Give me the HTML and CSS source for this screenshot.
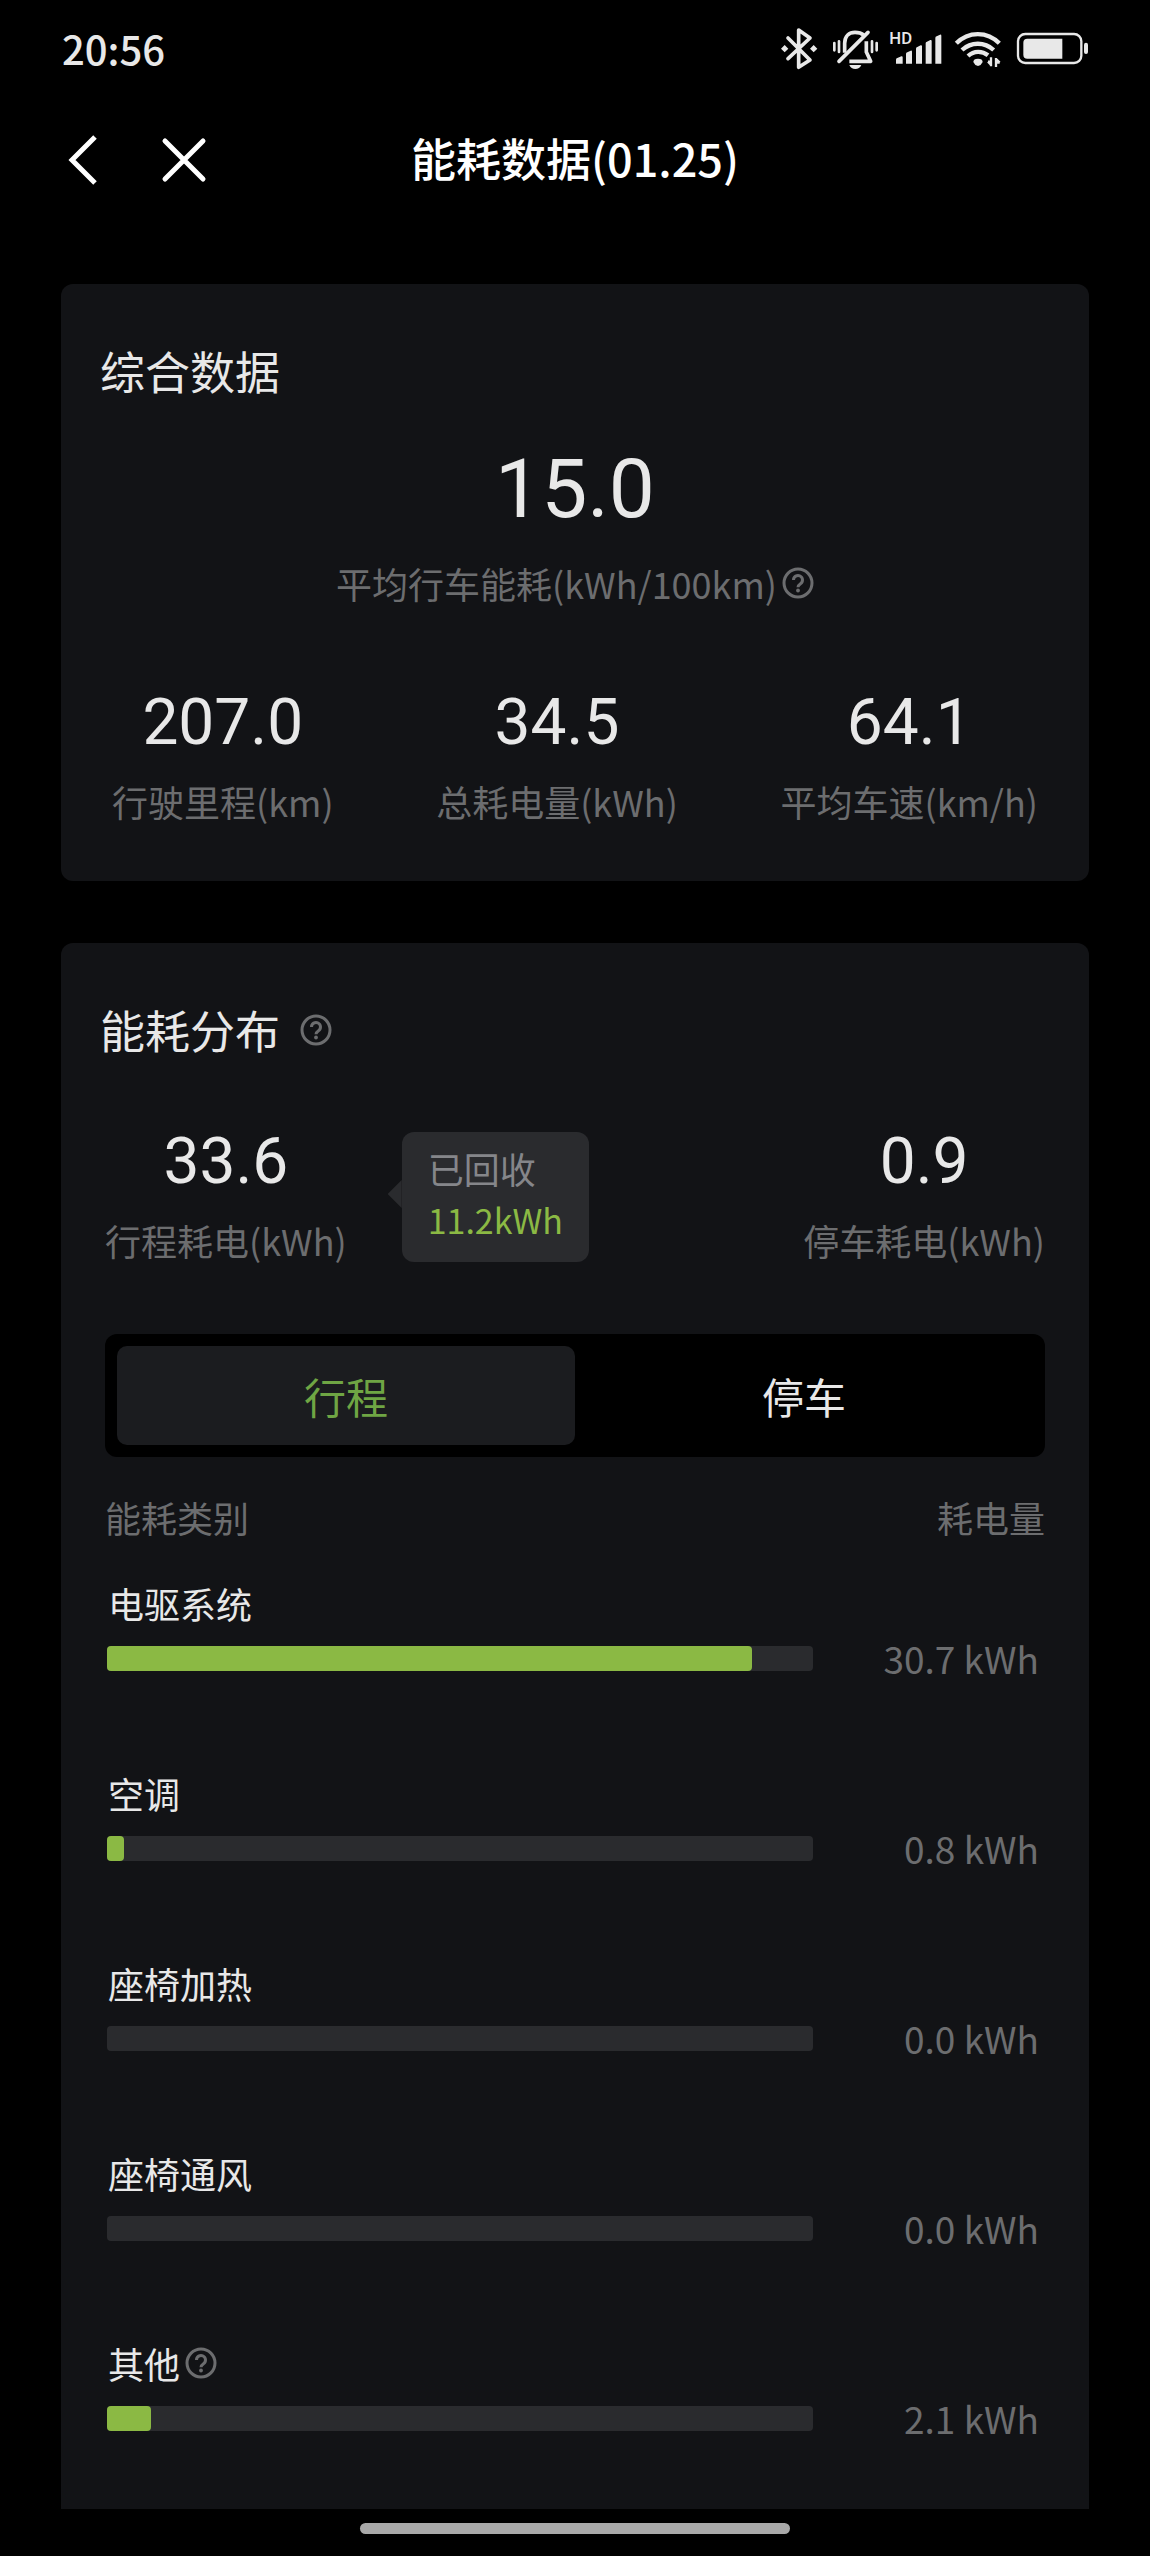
FILE: index.html
```
<!DOCTYPE html>
<html lang="zh-CN">
<head>
    <meta charset="UTF-8">
    <meta name="viewport" content="width=device-width, initial-scale=1.0">
    <title>能耗数据</title>
    <link rel="stylesheet" href="styles.css">
</head>
<body>
    <svg class="sprite" aria-hidden="true">
        <symbol id="help" viewBox="0 0 32 32">
            <circle cx="16" cy="16" r="14" fill="none" stroke="currentColor" stroke-width="3"/>
            <path d="M11.500 13a4.500 4.500 0 1 1 7 3.700c-1.700 1.200-2.500 1.800-2.500 3.500" fill="none" stroke="currentColor" stroke-width="3"/>
            <circle cx="16" cy="23.500" r="1.900" fill="currentColor"/>
        </symbol>
    </svg>

    <div class="status-bar">
        <span class="time">20:56</span>
        <div class="status-icons">
            <svg width="39" height="44" viewBox="60 54 117 132">
                <path d="M84 84l66 66-34 22V60l34 24-66 62" fill="none" stroke="currentColor" stroke-width="11" stroke-linejoin="round" stroke-linecap="round"/>
                <path d="M63 116l11-11 11 11-11 11zM150 116l11-11 11 11-11 11z" fill="currentColor"/>
            </svg>
            <svg width="48" height="44" viewBox="213 54 144 132">
                <path d="M254 128v-28c0-22 14-33 31-33 12 0 20 3 26 8M319 94v32l13 28h-64" fill="none" stroke="currentColor" stroke-width="11" stroke-linejoin="round"/>
                <path d="M237 154l87-87" stroke="currentColor" stroke-width="11" stroke-linecap="round"/>
                <path d="M223 99v22M237 94v32M336 94v32M350 99v22" stroke="currentColor" stroke-width="8" stroke-linecap="round"/>
                <path d="M268 165h36c-3 8-10 12-18 12s-15-4-18-12z" fill="currentColor"/>
            </svg>
            <svg width="51" height="44" viewBox="393 54 153 132">
                <text class="hd" x="388" y="103">HD</text>
                <path d="M408 161v-12q0-4 4-5l12-5q4-1 4 3v19zM438 161v-29q0-4 4-5l10-5q4-1 4 3v36zM468 161v-45q0-4 4-5l10-5q4-1 4 3v52zM497 161v-61q0-4 4-5l10-5q4-1 4 3v68zM526 161v-77q0-4 4-5l10-5q4-1 4 3v84z" fill="currentColor"/>
            </svg>
            <svg width="48" height="44" viewBox="582 54 144 132">
                <path d="M589 100c36-37 93-37 129 0M606 120c27-25 68-25 95 0M624 138c18-16 42-16 60-2" fill="none" stroke="currentColor" stroke-width="13"/>
                <path d="M640 156q0-10 14-10t14 10q-4 10-14 12-10-2-14-12z" fill="currentColor"/>
                <path d="M693 142v27M684 155h7M684 155l8 8M708 171v-27M719 158h-9M719 158l-9-9" fill="none" stroke="currentColor" stroke-width="7"/>
            </svg>
            <svg width="74" height="44" viewBox="762 54 222 132">
                <rect x="774" y="72" width="190" height="87" rx="22" fill="none" stroke="currentColor" stroke-width="7"/>
                <path d="M802 86h105v60H802q-12 0-12-12V98q0-12 12-12z" fill="currentColor"/>
                <rect x="972" y="98" width="12" height="34" rx="6" fill="currentColor"/>
            </svg>
        </div>
    </div>

    <header class="nav-bar">
        <div class="nav-actions">
            <button type="button" aria-label="返回">
                <svg width="30" height="48" viewBox="0 0 30 48"><path d="M27 1L4 24l23 23" fill="none" stroke="currentColor" stroke-width="5"/></svg>
            </button>
            <button type="button" aria-label="关闭">
                <svg width="44" height="44" viewBox="0 0 44 44"><path d="M3 3l38 38M41 3L3 41" stroke="currentColor" stroke-width="5" stroke-linecap="round"/></svg>
            </button>
        </div>
        <h1>能耗数据(01.25)</h1>
    </header>

    <main>
        <section class="card">
            <h2>综合数据</h2>
            <div class="average">
                <div class="value value-large">15.0</div>
                <div class="label">平均行车能耗(kWh/100km)
                    <button type="button" class="help" aria-label="说明"><svg><use href="#help"/></svg></button>
                </div>
            </div>
            <div class="stats">
                <div class="stat">
                    <div class="value">207.0</div>
                    <div class="label">行驶里程(km)</div>
                </div>
                <div class="stat">
                    <div class="value">34.5</div>
                    <div class="label">总耗电量(kWh)</div>
                </div>
                <div class="stat">
                    <div class="value">64.1</div>
                    <div class="label">平均车速(km/h)</div>
                </div>
            </div>
        </section>

        <section class="card card-detail">
            <h2>能耗分布
                <button type="button" class="help" aria-label="说明"><svg><use href="#help"/></svg></button>
            </h2>
            <div class="split">
                <div class="stat">
                    <div class="value">33.6</div>
                    <div class="label">行程耗电(kWh)</div>
                </div>
                <div class="recovered">
                    <div>已回收</div>
                    <div class="recovered-value">11.2kWh</div>
                </div>
                <div class="stat stat-parking">
                    <div class="value">0.9</div>
                    <div class="label">停车耗电(kWh)</div>
                </div>
            </div>

            <div class="tabs" role="tablist">
                <button type="button" class="tab active" role="tab" aria-selected="true">行程</button>
                <button type="button" class="tab" role="tab" aria-selected="false">停车</button>
            </div>

            <table class="usage">
                <thead>
                    <tr><th>能耗类别</th><th>耗电量</th></tr>
                </thead>
                <tbody>
                    <tr>
                        <td>
                            <div class="name">电驱系统</div>
                            <div class="bar"><div class="fill" style="width: 91.4%"></div></div>
                        </td>
                        <td class="amount">30.7 kWh</td>
                    </tr>
                    <tr>
                        <td>
                            <div class="name">空调</div>
                            <div class="bar"><div class="fill" style="width: 2.4%"></div></div>
                        </td>
                        <td class="amount">0.8 kWh</td>
                    </tr>
                    <tr>
                        <td>
                            <div class="name">座椅加热</div>
                            <div class="bar"><div class="fill" style="width: 0%"></div></div>
                        </td>
                        <td class="amount">0.0 kWh</td>
                    </tr>
                    <tr>
                        <td>
                            <div class="name">座椅通风</div>
                            <div class="bar"><div class="fill" style="width: 0%"></div></div>
                        </td>
                        <td class="amount">0.0 kWh</td>
                    </tr>
                    <tr>
                        <td>
                            <div class="name">其他
                                <button type="button" class="help" aria-label="说明"><svg><use href="#help"/></svg></button>
                            </div>
                            <div class="bar"><div class="fill" style="width: 6.3%"></div></div>
                        </td>
                        <td class="amount">2.1 kWh</td>
                    </tr>
                </tbody>
            </table>
        </section>
    </main>

    <div class="home-indicator"></div>
</body>
</html>
```
FILE: styles.css
```
* {
    box-sizing: border-box;
}
body {
    margin: 0;
    background: #000;
    color: #e8e8e8;
    font-family: "Noto Sans CJK SC", sans-serif;
    font-size: 36px;
    line-height: 44px;
}
h1, h2 {
    margin: 0;
}
button {
    padding: 0;
    border: none;
    background: none;
    color: inherit;
    font: inherit;
    cursor: pointer;
}
svg {
    display: block;
    overflow: visible;
}
.sprite {
    position: absolute;
    width: 0;
    height: 0;
}

/* status bar */
.status-bar {
    display: flex;
    justify-content: space-between;
    align-items: center;
    height: 100px;
    padding: 0 62px;
}
.time {
    padding-bottom: 4px;
    font-size: 40px;
    font-weight: 500;
}
.status-icons {
    display: flex;
    gap: 12px;
}
.hd {
    font: 500 50px Roboto, sans-serif;
    fill: currentColor;
}

/* nav bar */
.nav-bar {
    display: grid;
    grid-template-columns: 1fr auto 1fr;
    align-items: center;
    height: 120px;
    padding: 0 68px;
    color: #fff;
}
.nav-actions {
    display: flex;
    align-items: center;
    gap: 64px;
}
h1 {
    padding-bottom: 4px;
    font-size: 45px;
    font-weight: 500;
}

main {
    padding: 64px 61px 0;
}
.card {
    margin-bottom: 62px;
    padding: 57px 39px 58px;
    border-radius: 12px;
    background: #121316;
}
.card-detail {
    margin-bottom: 14px;
    padding-bottom: 78px;
    border-radius: 12px 12px 0 0;
}
h2 {
    display: flex;
    align-items: center;
    gap: 20px;
    font-size: 45px;
    font-weight: 400;
    line-height: 60px;
}
.help {
    width: 32px;
    height: 32px;
    color: #6c6d6f;
}
.help svg {
    width: 32px;
    height: 32px;
}
.value {
    font-family: Roboto, sans-serif;
    font-size: 64px;
    line-height: 72px;
}
.value-large {
    font-size: 82px;
    line-height: 88px;
}
.label {
    color: #6c6d6f;
}
.average {
    margin-top: 44px;
    text-align: center;
}
.average .label {
    display: flex;
    justify-content: center;
    align-items: center;
    gap: 5px;
    margin-top: 28px;
}
.stat {
    text-align: center;
}
.stat .label {
    margin-top: 20px;
}
.stats {
    display: flex;
    justify-content: space-between;
    margin-top: 82px;
    padding: 0 12px;
}

/* trip / parking split */
.split {
    display: flex;
    align-items: flex-end;
    margin-top: 66px;
    padding: 0 5px;
}
.recovered {
    position: relative;
    margin-left: 55px;
    padding: 10px 26px 16px;
    border-radius: 12px;
    background: #2a2b2e;
    color: #85868a;
    line-height: 52px;
}
.recovered::before {
    content: "";
    position: absolute;
    top: 48px;
    left: -14px;
    width: 14px;
    height: 28px;
    background: #2a2b2e;
    clip-path: polygon(100% 0, 0 50%, 100% 100%);
}
.recovered-value {
    color: #8bb944;
    font-size: 34px;
}
.stat-parking {
    margin-left: auto;
}

.tabs {
    display: flex;
    margin: 72px 5px 0;
    padding: 12px;
    border-radius: 12px;
    background: #000;
}
.tab {
    flex: 1;
    height: 99px;
    border-radius: 10px;
    font-size: 42px;
}
.tab.active {
    background: #1b1c1f;
    color: #6fa544;
}

/* usage by category */
.usage {
    width: 100%;
    margin-top: 38px;
    padding: 0 5px;
    border-spacing: 0;
}
.usage th {
    padding: 0;
    color: #6c6d6f;
    font-weight: 400;
    text-align: left;
}
.usage th:last-child {
    width: 232px;
    text-align: right;
}
.usage td {
    padding: 100px 0 0 2px;
    vertical-align: bottom;
}
.usage tr:first-child td {
    padding-top: 42px;
}
.name {
    display: flex;
    align-items: center;
    gap: 5px;
    padding-left: 1px;
}
.bar {
    height: 25px;
    margin-top: 21px;
    border-radius: 4px;
    background: #2a2b2e;
}
.fill {
    height: 100%;
    border-radius: 4px;
    background: #8bb944;
}
.usage .amount {
    padding-right: 6px;
    color: #6c6d6f;
    font-size: 37px;
    line-height: 25px;
    text-align: right;
}

.home-indicator {
    width: 430px;
    max-width: 60%;
    height: 11px;
    margin: 0 auto 20px;
    border-radius: 6px;
    background: #a8a8a8;
}
```
